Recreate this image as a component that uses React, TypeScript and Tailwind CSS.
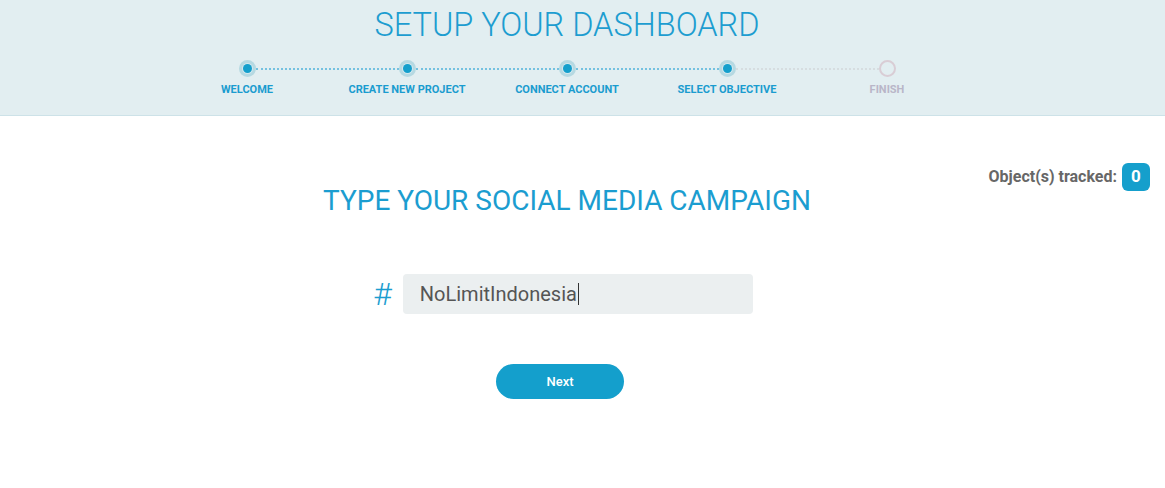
import React from "react";

const steps = [
  { label: "WELCOME", done: true },
  { label: "CREATE NEW PROJECT", done: true },
  { label: "CONNECT ACCOUNT", done: true },
  { label: "SELECT OBJECTIVE", done: true },
  { label: "FINISH", done: false },
];

function Dot({ done }: { done: boolean }) {
  if (!done)
    return <div className="w-[17px] h-[17px] rounded-full border-2 border-[#d9cdd5] shrink-0" />;
  return (
    <div className="w-[17px] h-[17px] rounded-full bg-[#b6d9e2] flex items-center justify-center shrink-0">
      <div className="w-[11px] h-[11px] rounded-full bg-[#d3e8ee] flex items-center justify-center">
        <div className="w-[9px] h-[9px] rounded-full bg-[#149fcc]" />
      </div>
    </div>
  );
}

export default function App() {
  return (
    <div className="w-[1165px] h-[488px] bg-white font-['Roboto',sans-serif] overflow-hidden">
      <header className="h-[116px] bg-[#e2eef1] border-b border-[#cde2e8] flex flex-col items-center pr-[31px]">
        <h1 className="pt-[5px] text-[32.5px] leading-[40px] font-light text-[#1d9dd0]">
          SETUP YOUR DASHBOARD
        </h1>
        <div className="mt-[15px] w-[657px] flex items-center">
          {steps.map((s, i) => (
            <React.Fragment key={s.label}>
              <Dot done={s.done} />
              {i < steps.length - 1 && (
                <div
                  className={
                    "flex-1 border-t-2 border-dotted " +
                    (steps[i + 1].done ? "border-[#74c1e0]" : "border-[#d6dde0]")
                  }
                />
              )}
            </React.Fragment>
          ))}
        </div>
        <div className="mt-[6px] flex">
          {steps.map((s) => (
            <div
              key={s.label}
              className={
                "w-[160px] text-center text-[11px] leading-[13px] font-bold " +
                (s.done ? "text-[#1a9ccf]" : "text-[#b9b6c8]")
              }
            >
              {s.label}
            </div>
          ))}
        </div>
      </header>

      <main className="relative">
        <div className="absolute right-[15px] top-[47px] flex items-center gap-[5px]">
          <span className="text-[16px] font-bold text-[#676767]">Object(s) tracked:</span>
          <span className="w-[28px] h-[28px] rounded-[6px] bg-[#159fcc] text-white text-[17px] font-bold flex items-center justify-center">
            0
          </span>
        </div>

        <div className="flex flex-col items-center pr-[31px]">
          <h2 className="mt-[68px] text-[28px] leading-[33px] text-[#1b9dd0]">
            TYPE YOUR SOCIAL MEDIA CAMPAIGN
          </h2>

          <div className="mt-[57px] flex items-center gap-[11px] ml-[-8px]">
            <span className="text-[32px] leading-[40px] font-light text-[#1b9dd0]">#</span>
            <div className="w-[350px] h-[40px] rounded-[4px] bg-[#ebeff0] flex items-center pl-[17px] text-[20px] text-[#555555]">
              NoLimitIndonesia
              <span className="w-[1px] h-[22px] bg-[#333333] ml-[1px]" />
            </div>
          </div>

          <button className="mt-[50px] mr-[14px] w-[128px] h-[35px] rounded-full bg-[#149fcc] text-white text-[13px] font-medium">
            Next
          </button>
        </div>
      </main>
    </div>
  );
}
